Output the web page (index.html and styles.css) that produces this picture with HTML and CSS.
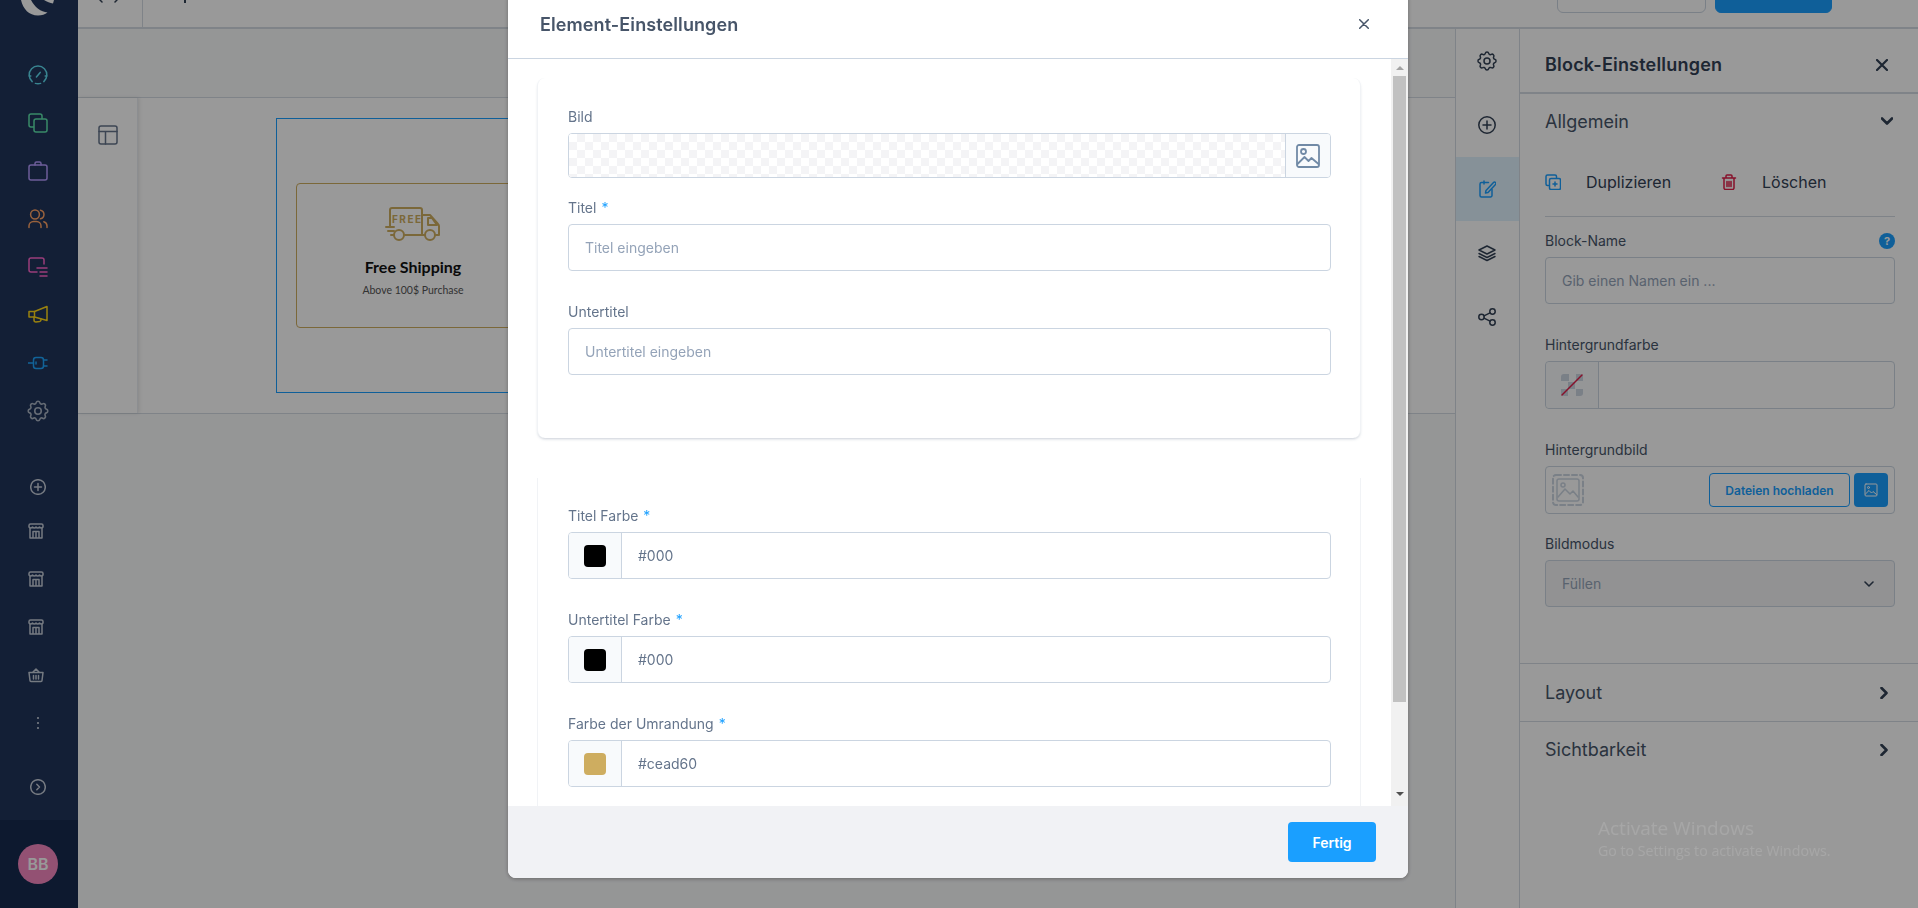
FILE: index.html
```html
<!DOCTYPE html>
<html lang="de">
<head>
<meta charset="utf-8">
<title>Element-Einstellungen</title>
<link rel="stylesheet" href="styles.css">
</head>
<body>
<div class="app">
  <aside class="sidebar">
    <div class="logo"><svg width="36" height="16" viewBox="0 0 36 16"><path d="M1 0C3 9 9 15.500 18 15.500C22 15.500 25 14.500 27.500 12.500C21 12 14.500 7 11 0Z"/><path d="M24 0H34L33 3.500C30 2.800 27 1.800 24 0Z"/></svg></div>
    <nav class="nav">
      <a class="nav-item c-teal"><svg class="i20" viewBox="0 0 20 20"><path d="M4.200 16.600A9 9 0 0 1 3.600 3.700A9 9 0 0 1 16.400 3.700A9 9 0 0 1 15.800 16.600"/><path d="M1.200 11h1.600M17.200 11h1.600M7.400 18.400a9 9 0 0 0 5.200 0M8.400 12l3.800-4.600"/></svg></a>
      <a class="nav-item c-green"><svg class="i20" viewBox="0 0 20 20"><path d="M5.500 14H3a2 2 0 0 1-2-2V3a2 2 0 0 1 2-2h9a2 2 0 0 1 2 2v2.500"/><rect x="6" y="6" width="13" height="13" rx="2"/></svg></a>
      <a class="nav-item c-purple"><svg class="i20" viewBox="0 0 20 20"><rect x="1" y="4" width="18" height="15" rx="2"/><path d="M7 4V2.500A1.500 1.500 0 0 1 8.500 1h3A1.500 1.500 0 0 1 13 2.500V4"/></svg></a>
      <a class="nav-item c-orange"><svg class="i20" viewBox="0 0 20 20"><circle cx="7" cy="5.500" r="4.400"/><path d="M1 18.500v-1.500a4.500 4.500 0 0 1 4.500-4.500h3a4.500 4.500 0 0 1 4.500 4.500v1.500M12.500 1.200a4.400 4.400 0 0 1 0 8.600M15.800 12.700a4.500 4.500 0 0 1 3.200 4.300v1.500"/></svg></a>
      <a class="nav-item c-pink"><svg class="i20" viewBox="0 0 20 20"><path d="M9 15H3a2 2 0 0 1-2-2V3a2 2 0 0 1 2-2h11a2 2 0 0 1 2 2v4"/><path d="M9 11h10M12 15h7M12 19h7"/></svg></a>
      <a class="nav-item c-yellow"><svg class="i20" viewBox="0 0 20 20"><path d="M1 6.500h5.500L19 1.500v14l-12.500-3.500H1z"/><path d="M6.500 6.500V12M6 12v3a2 2 0 0 0 2 2l3.500-.5a2 2 0 0 0 1.500-2.500"/></svg></a>
      <a class="nav-item c-blue"><svg class="i20" viewBox="0 0 20 20"><rect x="5.500" y="4.500" width="10" height="11" rx="2.500"/><path d="M0 10h5.500M15.500 7H19M15.500 13H19M8 9v2"/></svg></a>
      <a class="nav-item c-grey-dim"><svg class="i26" viewBox="0 0 24 24"><path d="M10.300 4.300c.4-1.800 3-1.800 3.400 0a1.700 1.700 0 0 0 2.600 1.100c1.500-.9 3.300.8 2.400 2.400a1.700 1.700 0 0 0 1 2.500c1.800.4 1.800 3 0 3.400a1.700 1.700 0 0 0-1 2.600c.9 1.500-.9 3.300-2.400 2.400a1.700 1.700 0 0 0-2.600 1c-.4 1.800-3 1.800-3.400 0a1.700 1.700 0 0 0-2.600-1c-1.500.9-3.300-.9-2.400-2.400a1.700 1.700 0 0 0-1-2.600c-1.800-.4-1.800-3 0-3.400a1.700 1.700 0 0 0 1-2.500c-.9-1.600.9-3.300 2.400-2.400a1.700 1.700 0 0 0 2.600-1.100z"/><circle cx="12" cy="12" r="3"/></svg></a>
    </nav>
    <nav class="nav nav-lower">
      <a class="nav-item nav-item-plus c-grey"><svg class="i16" viewBox="0 0 16 16"><circle cx="8" cy="8" r="7.300"/><path d="M8 4.500v7M4.500 8h7"/></svg></a>
      <a class="nav-item nav-item-shift c-grey"><svg class="i16" viewBox="0 0 16 16"><path d="M1 2.500A1.500 1.500 0 0 1 2.500 1h11A1.500 1.500 0 0 1 15 2.500v1.500c-1 1.300-2.500 1.300-3.500 0c-1 1.300-2.500 1.300-3.500 0c-1 1.300-2.500 1.300-3.500 0c-1 1.300-2.500 1.300-3.500 0z"/><path d="M2 5.500V15h12V5.500M5 15V8.500h6V15M8 8.500V15"/></svg></a>
      <a class="nav-item nav-item-shift c-grey"><svg class="i16" viewBox="0 0 16 16"><path d="M1 2.500A1.500 1.500 0 0 1 2.500 1h11A1.500 1.500 0 0 1 15 2.500v1.500c-1 1.300-2.500 1.300-3.500 0c-1 1.300-2.500 1.300-3.500 0c-1 1.300-2.500 1.300-3.500 0c-1 1.300-2.500 1.300-3.500 0z"/><path d="M2 5.500V15h12V5.500M5 15V8.500h6V15M8 8.500V15"/></svg></a>
      <a class="nav-item nav-item-shift c-grey"><svg class="i16" viewBox="0 0 16 16"><path d="M1 2.500A1.500 1.500 0 0 1 2.500 1h11A1.500 1.500 0 0 1 15 2.500v1.500c-1 1.300-2.500 1.300-3.500 0c-1 1.300-2.500 1.300-3.500 0c-1 1.300-2.500 1.300-3.500 0c-1 1.300-2.500 1.300-3.500 0z"/><path d="M2 5.500V15h12V5.500M5 15V8.500h6V15M8 8.500V15"/></svg></a>
      <a class="nav-item nav-item-shift c-grey"><svg class="i16" viewBox="0 0 16 16"><path d="M1 5.500h14l-1 8a1 1 0 0 1-1 1H3a1 1 0 0 1-1-1zM4.500 5.500L8 2l3.500 3.500M5.500 8.500v3.500M8 8.500v3.500M10.500 8.500v3.500"/></svg></a>
      <a class="nav-item c-grey"><svg class="i16" viewBox="0 0 16 16"><path class="dots" d="M8 3v.01M8 8v.01M8 13v.01"/></svg></a>
      <a class="nav-item nav-item-expand c-grey"><svg class="i16" viewBox="0 0 16 16"><circle cx="8" cy="8" r="7.300"/><path d="M6.800 5.300L9.500 8l-2.700 2.700"/></svg></a>
    </nav>
    <div class="user"><span class="avatar">BB</span></div>
  </aside>

  <div class="main">
    <header class="topbar">
      <div class="topbar-left">
        <svg class="top-glyph" width="20" height="10" viewBox="0 0 20 10"><path d="M1 0L3 2M18 0L16 2"/></svg>
        <span class="top-sep"></span>
        <span class="top-mark"></span>
      </div>
      <div class="topbar-right">
        <span class="top-btn"></span>
        <span class="top-btn top-btn-primary"></span>
      </div>
    </header>

    <div class="workspace">
      <section class="editor">
        <div class="toolbar"></div>
        <div class="canvas-row">
          <div class="sub-rail">
            <svg class="i20 sub-icon" viewBox="0 0 20 20"><rect x="1" y="1" width="18" height="18" rx="2"/><path d="M1 6.500h18M7.500 6.500V19"/></svg>
          </div>
          <div class="canvas">
            <div class="block">
              <div class="promo">
                <svg class="truck" width="56" height="36" viewBox="0 0 56 36">
                  <path d="M5 21V4a2 2 0 0 1 2-2h28a2 2 0 0 1 2 2v25H20M37 9h8l8 9a3 3 0 0 1 1 2v9h-4M37 29h3M43 12h4l5 7h-9z"/>
                  <path d="M1 21h8M3 25h6M6 29h3"/>
                  <circle cx="14" cy="29" r="5"/><circle cx="45" cy="29" r="5"/>
                  <text x="7" y="17" class="truck-text">FREE</text>
                </svg>
                <strong class="promo-title">Free Shipping</strong>
                <span class="promo-sub">Above 100$ Purchase</span>
              </div>
            </div>
          </div>
        </div>
      </section>

      <div class="rail">
        <a class="rail-item"><svg class="i24" viewBox="0 0 24 24"><path d="M10.300 4.300c.4-1.800 3-1.800 3.400 0a1.700 1.700 0 0 0 2.600 1.100c1.500-.9 3.300.8 2.400 2.400a1.700 1.700 0 0 0 1 2.500c1.800.4 1.800 3 0 3.400a1.700 1.700 0 0 0-1 2.600c.9 1.500-.9 3.300-2.400 2.400a1.700 1.700 0 0 0-2.600 1c-.4 1.800-3 1.800-3.400 0a1.700 1.700 0 0 0-2.600-1c-1.500.9-3.300-.9-2.400-2.400a1.700 1.700 0 0 0-1-2.600c-1.800-.4-1.800-3 0-3.400a1.700 1.700 0 0 0 1-2.500c-.9-1.600.9-3.300 2.400-2.400a1.700 1.700 0 0 0 2.600-1.100z"/><circle cx="12" cy="12" r="3"/></svg></a>
        <a class="rail-item"><svg class="i18" viewBox="0 0 18 18"><circle cx="9" cy="9" r="8.200"/><path d="M9 5v8M5 9h8"/></svg></a>
        <a class="rail-item rail-item-active"><svg class="i18" viewBox="0 0 18 18"><path d="M14 9.500V15.500a1.500 1.500 0 0 1-1.500 1.500h-9A1.500 1.500 0 0 1 2 15.500V4a1.500 1.500 0 0 1 1.500-1.500h7"/><path d="M6 1v3M8 10.500L15.500 2.500a1.300 1.300 0 0 1 2 2L10 12.500l-2.500.5z"/></svg></a>
        <a class="rail-item"><svg class="i18" viewBox="0 0 18 18"><path d="M9 2L1 6l8 4 8-4zM1 9.500l8 4 8-4M1 12.500l8 4 8-4"/></svg></a>
        <a class="rail-item"><svg class="i18" viewBox="0 0 18 18"><circle cx="3.500" cy="9" r="2.700"/><circle cx="14.500" cy="3.500" r="2.700"/><circle cx="14.500" cy="14.500" r="2.700"/><path d="M6 7.800l6-3M6 10.200l6 3"/></svg></a>
      </div>

      <aside class="panel">
        <div class="panel-head">
          <h2 class="panel-title">Block-Einstellungen</h2>
          <svg class="panel-x" width="12" height="12" viewBox="0 0 12 12"><path d="M1 1l10 10M11 1L1 11"/></svg>
        </div>
        <div class="panel-section">
          <div class="section-row section-row-first">
            <span>Allgemein</span>
            <svg class="chev" width="12" height="8" viewBox="0 0 12 8"><path d="M1 1.500l5 5 5-5"/></svg>
          </div>
          <div class="actions">
            <a class="action action-dup">
              <svg class="i16 c-action-blue" viewBox="0 0 16 16"><path d="M3.500 11.500H2.500a1.500 1.500 0 0 1-1.500-1.500V2.500A1.500 1.500 0 0 1 2.500 1H10a1.500 1.500 0 0 1 1.500 1.500v1"/><rect x="4.500" y="4.500" width="11" height="11" rx="1.500"/><path d="M10 8v4M8 10h4"/></svg>
              <span>Duplizieren</span>
            </a>
            <a class="action">
              <svg class="i16 c-action-red" viewBox="0 0 16 16"><path d="M1.500 4h13M5 4V2a1 1 0 0 1 1-1h4a1 1 0 0 1 1 1v2M3 4v10a1.500 1.500 0 0 0 1.500 1.500h7A1.500 1.500 0 0 0 13 14V4M6 7.500v5M8 7.500v5M10 7.500v5"/></svg>
              <span>Löschen</span>
            </a>
          </div>
          <div class="pfield">
            <div class="plabel-row"><label class="plabel">Block-Name</label><span class="help">?</span></div>
            <div class="pinput placeholder">Gib einen Namen ein ...</div>
          </div>
          <div class="pfield">
            <label class="plabel">Hintergrundfarbe</label>
            <div class="pinput pinput-split">
              <span class="none-swatch"><svg width="22" height="22" viewBox="0 0 22 22"><path class="checker" d="M0 3a3 3 0 0 1 3-3h5v7H0zM15 0h4a3 3 0 0 1 3 3v4h-7zM7 8h7v7H7zM0 15h7v7H3a3 3 0 0 1-3-3zM15 15h7v4a3 3 0 0 1-3 3h-4z"/><path class="slash" d="M1 21L21 1"/></svg></span>
            </div>
          </div>
          <div class="pfield pfield-tight">
            <label class="plabel">Hintergrundbild</label>
            <div class="pinput pinput-upload">
              <svg class="upload-ph" width="32" height="32" viewBox="0 0 32 32"><rect class="dash" x="1" y="1" width="30" height="30" rx="3"/><rect x="5" y="5" width="22" height="22" rx="2"/><circle cx="11" cy="11" r="2"/><path d="M6 23l7-8 5 5 3-3 5 6"/></svg>
              <a class="upload-btn">Dateien hochladen</a>
              <a class="upload-pick"><svg width="14" height="14" viewBox="0 0 14 14"><rect x="1" y="1" width="12" height="12" rx="1"/><circle cx="4.500" cy="4.500" r="1"/><path d="M1.500 11l3.500-3.500 2.500 2.500 1.500-1.500 3.500 3"/></svg></a>
            </div>
          </div>
          <div class="pfield">
            <label class="plabel">Bildmodus</label>
            <div class="pinput pselect"><span>Füllen</span><svg class="chev-small" width="10" height="6" viewBox="0 0 10 6"><path d="M1 1l4 4 4-4"/></svg></div>
          </div>
        </div>
        <div class="section-row section-row-layout">
          <span>Layout</span>
          <svg class="chev" width="8" height="12" viewBox="0 0 8 12"><path d="M1.500 1l5 5-5 5"/></svg>
        </div>
        <div class="section-row section-row-plain">
          <span>Sichtbarkeit</span>
          <svg class="chev" width="8" height="12" viewBox="0 0 8 12"><path d="M1.500 1l5 5-5 5"/></svg>
        </div>
      </aside>
    </div>
  </div>
</div>

<div class="backdrop"></div>

<div class="watermark">
  <div class="wm-title">Activate Windows</div>
  <div class="wm-sub">Go to Settings to activate Windows.</div>
</div>

<div class="modal">
  <div class="modal-head">
    <h1 class="modal-title">Element-Einstellungen</h1>
    <svg class="modal-x" width="10" height="10" viewBox="0 0 10 10"><path d="M.7.700l8.600 8.600M9.300.700L.7 9.300"/></svg>
  </div>
  <div class="modal-body">
    <div class="modal-scroll">
      <section class="card card-first">
        <div class="field field-image">
          <label class="label">Bild</label>
          <div class="image-input">
            <div class="checkers"></div>
            <span class="image-btn"><svg width="24" height="24" viewBox="0 0 24 24"><rect x="1" y="1" width="22" height="22" rx="2"/><circle cx="7.500" cy="7.500" r="2.500"/><path d="M1.500 20l7-7 4 4 3-3 7 6"/></svg></span>
          </div>
        </div>
        <div class="field">
          <label class="label">Titel <em class="req">*</em></label>
          <div class="input placeholder-m">Titel eingeben</div>
        </div>
        <div class="field field-last">
          <label class="label">Untertitel</label>
          <div class="input placeholder-m">Untertitel eingeben</div>
        </div>
      </section>
      <section class="card card-second">
        <div class="field">
          <label class="label">Titel Farbe <em class="req">*</em></label>
          <div class="color-input"><span class="color-prefix"><i class="swatch swatch-black"></i></span><span class="color-value">#000</span></div>
        </div>
        <div class="field">
          <label class="label">Untertitel Farbe <em class="req">*</em></label>
          <div class="color-input"><span class="color-prefix"><i class="swatch swatch-black"></i></span><span class="color-value">#000</span></div>
        </div>
        <div class="field">
          <label class="label">Farbe der Umrandung <em class="req">*</em></label>
          <div class="color-input"><span class="color-prefix"><i class="swatch swatch-gold"></i></span><span class="color-value">#cead60</span></div>
        </div>
      </section>
    </div>
    <div class="scrollbar">
      <span class="sb-up"></span>
      <span class="sb-thumb"></span>
      <span class="sb-down"></span>
    </div>
  </div>
  <div class="modal-foot"><a class="done-btn">Fertig</a></div>
</div>
</body>
</html>
```
FILE: styles.css
```css
* { box-sizing: border-box; }
html, body { margin: 0; height: 908px; overflow: hidden; }
body { font-family: Inter, "Liberation Sans", sans-serif; font-size: 14px; color: #334155; background: #fff; }
svg { display: block; flex: none; }
svg path, svg rect, svg circle { fill: none; stroke: currentColor; stroke-linecap: round; stroke-linejoin: round; }
.i26, .i24, .i20, .i18, .i16 { stroke-width: 1.500; }
.i26 { width: 26px; height: 26px; }
.i24 { width: 24px; height: 24px; }
.i20 { width: 20px; height: 20px; }
.i18 { width: 18px; height: 18px; }
.i16 { width: 16px; height: 16px; }

.app { display: flex; height: 908px; }

/* sidebar */
.sidebar { width: 78px; flex: none; display: flex; flex-direction: column; padding-right: 2px; background: #20345a; }
.logo { height: 51px; padding-left: 20px; }
.logo svg path { fill: #fff; stroke: none; }
.nav { display: flex; flex-direction: column; }
.nav-item { height: 48px; display: flex; align-items: center; justify-content: center; }
.nav-lower { margin-top: 32px; }
.nav-item-plus { height: 40px; }
.nav-item-shift { padding-right: 4px; }
.nav-item-expand { margin-top: 16px; }
.dots { stroke-width: 2.200; }
.c-teal { color: #5fdcf0; }
.c-green { color: #5fe6ad; }
.c-purple { color: #b49bff; }
.c-orange { color: #ffa366; }
.c-pink { color: #ff66cc; }
.c-yellow { color: #ffd81a; }
.c-blue { color: #1ea5ff; }
.c-grey { color: #c4cbd8; }
.c-grey-dim { color: #a8b2c2; }
.user { margin: auto -2px 0 0; padding-right: 2px; height: 88px; background: #162a4f; display: flex; align-items: center; justify-content: center; }
.avatar { width: 40px; height: 40px; border-radius: 50%; background: #f587c0; color: #fff; font-weight: 600; font-size: 16px; display: flex; align-items: center; justify-content: center; }

/* main */
.main { flex: 1; min-width: 0; display: flex; flex-direction: column; }
.topbar { height: 29px; flex: none; display: flex; justify-content: space-between; background: #fff; border-bottom: 2px solid #d4dbe3; overflow: hidden; }
.topbar-left { display: flex; height: 27px; }
.top-glyph { margin-left: 21px; color: #334155; stroke-width: 1.500; }
.top-sep { width: 1px; background: #d4dbe3; margin-left: 23px; }
.top-mark { width: 2px; height: 3px; margin-left: 41px; background: #334155; }
.topbar-right { display: flex; gap: 9px; padding-right: 86px; align-items: flex-end; height: 13px; }
.top-btn { width: 149px; height: 40px; flex: none; border: 1px solid #cbd5e1; border-radius: 6px; background: #fff; }
.top-btn-primary { width: 117px; background: #1a9fff; border-color: #1a9fff; }

.workspace { flex: 1; min-height: 0; display: flex; }
.editor { flex: 1; min-width: 0; background: #f9fafb; }
.toolbar { height: 69px; border-bottom: 1px solid #d4dbe3; }
.canvas-row { height: 316px; display: flex; border-bottom: 1px solid #d4dbe3; background: #fff; }
.sub-rail { width: 60px; flex: none; display: flex; justify-content: center; padding-top: 27px; box-shadow: 1px 0 4px rgba(0,0,0,.12); border-right: 1px solid #e9edf2; }
.sub-icon { color: #64748b; }
.canvas { flex: 1; padding: 20px 138px 0; }
.block { height: 275px; border: 1px solid #1a9fff; padding: 64px 19px 0; }
.promo { width: 234px; height: 145px; border: 1px solid #cead60; border-radius: 4px; display: flex; flex-direction: column; align-items: center; padding-top: 22px; }
.truck { color: #cead60; stroke-width: 2; }
.truck-text { font-family: Inter, sans-serif; font-size: 10px; font-weight: 700; letter-spacing: 1.500px; fill: #cead60; stroke: none; }
.promo-title { font-family: Lato, sans-serif; font-weight: 700; font-size: 16px; line-height: 20px; margin-top: 15px; color: #111; }
.promo-sub { font-family: Lato, sans-serif; font-size: 10.500px; line-height: 16px; margin-top: 5px; color: #555; }

/* rail */
.rail { width: 64px; flex: none; display: flex; flex-direction: column; background: #fff; border-left: 1px solid #d4dbe3; }
.rail-item { height: 64px; padding-right: 1px; display: flex; align-items: center; justify-content: center; color: #334155; }
.rail-item-active { background: #e0f2fe; color: #1a9fff; }

/* panel */
.panel { width: 399px; flex: none; background: #fff; border-left: 1px solid #d4dbe3; }
.panel-head { height: 65px; padding: 8px 30px 0 25px; border-bottom: 2px solid #d4dbe3; display: flex; align-items: center; justify-content: space-between; }
.panel-title { margin: 0; font-size: 18px; font-weight: 600; letter-spacing: .2px; color: #334155; }
.panel-x { stroke-width: 2.200; color: #334155; margin-top: 1px; }
.panel-section { height: 570px; border-bottom: 1px solid #d4dbe3; }
.section-row { height: 58px; padding: 0 30px 0 25px; border-bottom: 1px solid #d4dbe3; display: flex; align-items: center; justify-content: space-between; font-size: 18px; color: #475569; }
.section-row-first { height: 54px; border-bottom: 0; padding-right: 25px; }
.section-row-plain { border-bottom: 0; padding-bottom: 3px; }
.chev { color: #334155; stroke-width: 2.600; }
.actions { margin: 0 23px 0 25px; height: 69px; border-bottom: 1px solid #d4dbe3; display: flex; align-items: center; font-size: 16px; color: #334155; }
.action { display: flex; align-items: center; gap: 25px; }
.action-dup { width: 176px; }
.c-action-blue { color: #1a9fff; }
.c-action-red { color: #e11d48; }
.pfield { margin: 14px 23px 0 25px; }
.pfield + .pfield { margin-top: 31px; }
.pfield-tight + .pfield { margin-top: 20px; }
.plabel-row { display: flex; justify-content: space-between; align-items: center; }
.plabel { display: block; font-size: 14px; line-height: 20px; color: #475569; }
.help { width: 16px; height: 16px; border-radius: 50%; background: #1a9fff; color: #fff; font-size: 11px; line-height: 16px; font-weight: 700; text-align: center; }
.pinput { margin-top: 6px; height: 47px; border: 1px solid #cbd5e1; border-radius: 4px; display: flex; align-items: center; }
.placeholder { padding-left: 16px; color: #94a3b8; font-size: 14px; }
.pinput-split { height: 48px; }
.none-swatch { width: 53px; height: 100%; background: #f8fafc; border-right: 1px solid #cbd5e1; display: flex; align-items: center; justify-content: center; border-radius: 4px 0 0 4px; }
.none-swatch .checker { fill: #cbd5e1; stroke: none; }
.none-swatch .slash { stroke: #e11d48; stroke-width: 1.500; }
.pinput-upload { height: 48px; padding: 0 6px; }
.upload-ph { color: #cbd5e1; stroke-width: 1.500; margin-right: auto; }
.upload-ph .dash { stroke-dasharray: 5 3; stroke-width: 2; }
.upload-btn { width: 141px; height: 34px; border: 1px solid #1a9fff; border-radius: 4px; color: #1a9fff; font-size: 12px; font-weight: 600; display: flex; align-items: center; justify-content: center; }
.upload-pick { width: 34px; height: 34px; margin-left: 4px; border-radius: 4px; background: #1a9fff; color: #fff; display: flex; align-items: center; justify-content: center; }
.pselect { justify-content: space-between; padding: 0 20px 0 16px; background: #f3f4f6; color: #94a3b8; }
.chev-small { color: #334155; stroke-width: 1.600; }

/* overlay */
.backdrop { position: fixed; inset: 0; background: rgba(0,0,0,.4); }
.watermark { position: fixed; left: 1598px; top: 816px; color: rgba(255,255,255,.13); font-family: "Open Sans", sans-serif; }
.wm-title { font-size: 19px; line-height: 24px; }
.wm-sub { font-size: 14.200px; line-height: 18px; margin-top: 2px; }

/* modal */
.modal { position: fixed; left: 508px; top: -10px; width: 900px; height: 888px; background: #fff; border-radius: 8px; overflow: hidden; display: flex; flex-direction: column; box-shadow: 0 1px 4px rgba(0,0,0,.3); }
.modal-head { height: 69px; flex: none; padding: 0 39px 0 32px; border-bottom: 1px solid #cbd5e1; display: flex; align-items: center; justify-content: space-between; }
.modal-title { margin: 0; font-size: 18px; font-weight: 600; letter-spacing: .1px; color: #475569; }
.modal-x { color: #475569; stroke-width: 1.500; }
.modal-body { flex: 1; min-height: 0; display: flex; }
.modal-scroll { flex: 1; min-width: 0; padding: 19px 30px 0 29px; overflow: hidden; }
.card { background: #fff; border-left: 1px solid #f1f3f6; border-right: 1px solid #f1f3f6; padding: 0 29px 0 30px; }
.card-first { height: 360px; padding-top: 29px; border-radius: 8px; box-shadow: 0 2px 3px -1px rgba(100,116,139,.35); }
.card-second { margin-top: 40px; height: 400px; padding-top: 28px; }
.field { margin-bottom: 31px; }
.field-image { margin-bottom: 20px; }
.field-last { margin-bottom: 0; }
.label { display: block; height: 20px; margin-bottom: 6px; font-size: 14px; line-height: 20px; color: #64748b; }
.req { font-style: normal; color: #1a9fff; margin-left: 1px; }
.image-input { height: 45px; border: 1px solid #cbd5e1; border-radius: 4px; display: flex; overflow: hidden; }
.checkers { flex: 1; background-color: #fff; background-image: conic-gradient(#f4f4f6 25%, #fff 0 50%, #f4f4f6 0 75%, #fff 0); background-size: 16px 16px; }
.image-btn { width: 45px; flex: none; background: #f8fafc; border-left: 1px solid #cbd5e1; display: flex; align-items: center; justify-content: center; color: #718aa6; stroke-width: 1.800; }
.input { height: 47px; border: 1px solid #cbd5e1; border-radius: 4px; display: flex; align-items: center; padding-left: 16px; }
.placeholder-m { color: #94a3b8; }
.color-input { height: 47px; border: 1px solid #cbd5e1; border-radius: 4px; display: flex; align-items: center; overflow: hidden; }
.color-prefix { width: 53px; height: 100%; flex: none; background: #f8fafc; border-right: 1px solid #cbd5e1; display: flex; align-items: center; justify-content: center; }
.swatch { width: 22px; height: 22px; border-radius: 4px; display: block; }
.swatch-black { background: #000; }
.swatch-gold { background: #cead60; }
.color-value { padding-left: 16px; color: #64748b; }
.scrollbar { width: 17px; flex: none; background: #f1f1f1; display: flex; flex-direction: column; align-items: center; }
.sb-up { margin: 7px 0 6px; width: 0; height: 0; border: 4px solid transparent; border-top: 0; border-bottom: 4px solid #a3a3a3; }
.sb-thumb { width: 13px; height: 626px; background: #c1c1c1; }
.sb-down { margin-top: 90px; width: 0; height: 0; border: 4px solid transparent; border-bottom: 0; border-top: 4px solid #505050; }
.modal-foot { height: 72px; flex: none; background: #f1f2f5; display: flex; align-items: center; justify-content: flex-end; padding-right: 32px; }
.done-btn { width: 88px; height: 40px; background: #1a9fff; color: #fff; border-radius: 4px; font-weight: 600; font-size: 14px; display: flex; align-items: center; justify-content: center; }
```
